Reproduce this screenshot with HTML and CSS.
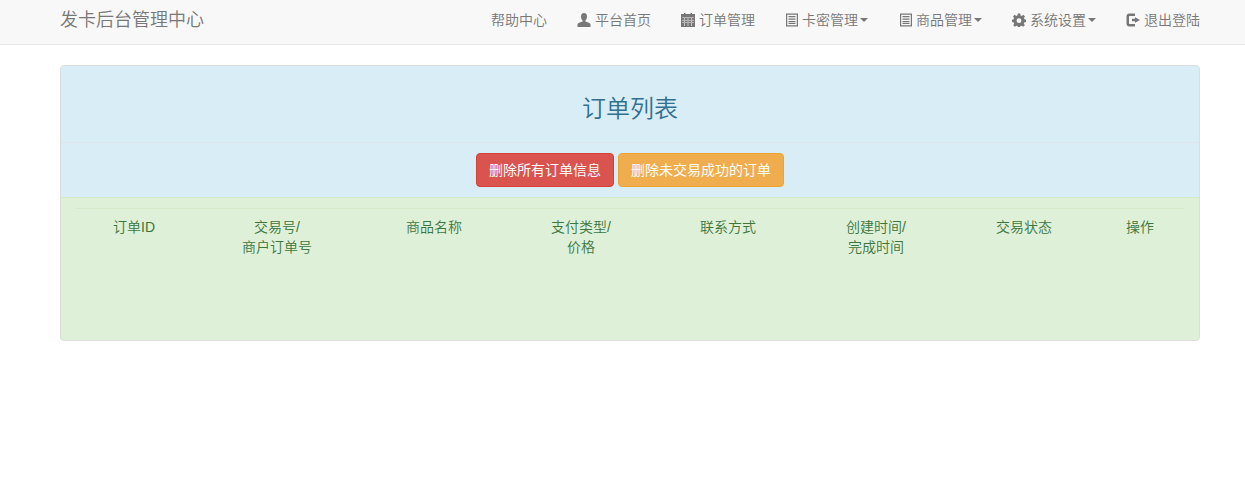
FILE: index.html
```html
<!DOCTYPE html>
<html lang="zh-CN">
<head>
<meta charset="utf-8">
<title>订单列表</title>
<link rel="stylesheet" href="styles.css">
</head>
<body>
<nav class="navbar">
  <a class="brand">发卡后台管理中心</a>
  <ul class="nav">
    <li><a>帮助中心</a></li>
    <li><a><svg class="icon" viewBox="0 0 14 14"><path d="M7 0C5 0 4 1.500 4 3.500C4 5.500 4.800 6.800 5.600 7.500L5.600 8.500C4 9.300 1 9.700 .5 11L.5 14L13.500 14L13.500 11C13 9.700 10 9.300 8.400 8.500L8.400 7.500C9.200 6.800 10 5.500 10 3.500C10 1.500 9 0 7 0Z"/></svg>平台首页</a></li>
    <li class="nav-tight"><a><svg class="icon" viewBox="0 0 14 14"><path d="M0 1H3V0H4.500V1H9.500V0H11V1H14V14H0ZM1 4.400V5H13V4.400ZM1 7V7.500H13V7ZM1 9.600V10.100H13V9.600ZM3.200 5V13H3.800V5ZM6.700 5V13H7.300V5ZM10.200 5V13H10.800V5Z" fill-rule="evenodd"/></svg>订单管理</a></li>
    <li><a><svg class="icon" viewBox="0 0 14 14"><path d="M2 .5H14V13.500H2ZM3.200 1.700V12.300H12.800V1.700ZM4.500 3H11.500V4.300H4.500ZM4.500 5.500H11.500V6.800H4.500ZM4.500 8H11.500V9.300H4.500ZM4.500 10H11.500V11H4.500Z" fill-rule="evenodd"/></svg>卡密管理<span class="caret"></span></a></li>
    <li><a><svg class="icon" viewBox="0 0 14 14"><path d="M2 .5H14V13.500H2ZM3.200 1.700V12.300H12.800V1.700ZM4.500 3H11.500V4.300H4.500ZM4.500 5.500H11.500V6.800H4.500ZM4.500 8H11.500V9.300H4.500ZM4.500 10H11.500V11H4.500Z" fill-rule="evenodd"/></svg>商品管理<span class="caret"></span></a></li>
    <li><a><svg class="icon" viewBox="0 0 14 14"><path d="M5.800 .5H8.200L8.600 2.400L9.700 2.900L11.400 1.800L13 3.500L11.900 5.100L12.400 6.200L14 6.700V9L12.300 9.400L11.800 10.500L12.800 12.200L11.200 13.800L9.600 12.700L8.500 13.100L8.100 14H5.900L5.500 13.100L4.400 12.700L2.800 13.800L1.200 12.200L2.200 10.500L1.700 9.400L0 9V6.700L1.600 6.200L2.100 5.100L1 3.500L2.600 1.800L4.300 2.900L5.400 2.400ZM7 5.300A2.400 2.400 0 1 0 7 10.100A2.400 2.400 0 1 0 7 5.300Z" fill-rule="evenodd"/></svg>系统设置<span class="caret"></span></a></li>
    <li><a><svg class="icon" viewBox="0 0 14 14"><path d="M3.500 .5H9V3H4C3.300 3 3 3.300 3 4V10C3 10.700 3.300 11 4 11H9V13.500H3.500C1.500 13.500 .5 12.500 .5 10.500V3.500C.5 1.500 1.500 .5 3.500 .5ZM9 4.300L14 7L9 9.700V8.300H6V5.700H9Z"/></svg>退出登陆</a></li>
  </ul>
</nav>
<main class="container">
  <section class="panel">
    <header class="panel-heading">
      <h3 class="panel-title">订单列表</h3>
    </header>
    <div class="toolbar">
      <a class="btn btn-danger">删除所有订单信息</a>
      <a class="btn btn-warning">删除未交易成功的订单</a>
    </div>
    <div class="panel-body">
      <table class="table">
        <colgroup>
          <col class="col-a">
          <col class="col-b">
          <col class="col-c">
          <col class="col-d">
          <col class="col-c">
          <col class="col-e">
          <col class="col-c">
          <col class="col-f">
        </colgroup>
        <thead>
          <tr>
            <th>订单ID</th>
            <th>交易号/<br>商户订单号</th>
            <th>商品名称</th>
            <th>支付类型/<br>价格</th>
            <th>联系方式</th>
            <th>创建时间/<br>完成时间</th>
            <th>交易状态</th>
            <th>操作</th>
          </tr>
        </thead>
      </table>
    </div>
  </section>
</main>
</body>
</html>
```
FILE: styles.css
```css
* {
  box-sizing: border-box;
}

html, body {
  margin: 0;
  padding: 0;
}

body {
  background: #fff;
  color: #333;
  font-family: "Liberation Sans", "Noto Sans CJK SC", sans-serif;
  font-size: 14px;
  font-weight: 350;
  line-height: 20px;
  overflow: hidden;
}

.navbar {
  display: flex;
  justify-content: space-between;
  align-items: center;
  height: 45px;
  padding: 0 45px 5px 60px;
  background: #f8f8f8;
  border-bottom: 1px solid #e7e7e7;
}

.brand {
  color: #777;
  font-size: 18px;
}

.nav {
  display: flex;
  gap: 30px;
  margin: 0;
  padding: 0;
  list-style: none;
}

.nav-tight {
  margin-right: -1px;
}

.nav a {
  display: flex;
  align-items: center;
  color: #777;
  white-space: nowrap;
}

.icon {
  width: 14px;
  height: 14px;
  margin-right: 4px;
  fill: #777;
  flex: none;
}

.caret {
  width: 0;
  height: 0;
  margin-left: 2px;
  border-top: 4px solid #777;
  border-left: 4px solid transparent;
  border-right: 4px solid transparent;
}

.container {
  padding: 20px 45px 0 60px;
}

.panel {
  border: 1px solid #ddd;
  border-radius: 4px;
  overflow: hidden;
  background: #dff0d8;
}

.panel-heading {
  height: 77px;
  padding-top: 26px;
  background: #d9edf7;
  border-bottom: 1px solid #dde4ec;
  text-align: center;
}

.panel-title {
  margin: 0;
  color: #31708f;
  font-size: 24px;
  font-weight: 350;
  line-height: 34px;
}

.toolbar {
  display: flex;
  justify-content: center;
  gap: 4px;
  height: 55px;
  padding-top: 10px;
  background: #d9edf7;
  border-bottom: 1px solid #d6e9c6;
}

.btn {
  height: 34px;
  padding: 6px 12px;
  border: 1px solid transparent;
  border-radius: 4px;
  color: #fff;
  font-size: 14px;
  font-weight: 400;
  line-height: 20px;
  white-space: nowrap;
}

.btn-danger {
  background: #d9534f;
  border-color: #d43f3a;
}

.btn-warning {
  background: #f0ad4e;
  border-color: #eea236;
}

.panel-body {
  height: 142px;
  padding: 10px 15px 15px;
}

.table {
  width: 100%;
  table-layout: fixed;
  border-collapse: collapse;
  color: #3c763d;
}

.table th {
  padding: 8px;
  border-top: 1px solid #d6e9c6;
  font-weight: 350;
  text-align: center;
  vertical-align: top;
}

.col-a { width: 116px; }
.col-b { width: 170px; }
.col-c { width: 144px; }
.col-d { width: 150px; }
.col-e { width: 152px; }
.col-f { width: 88px; }
```
